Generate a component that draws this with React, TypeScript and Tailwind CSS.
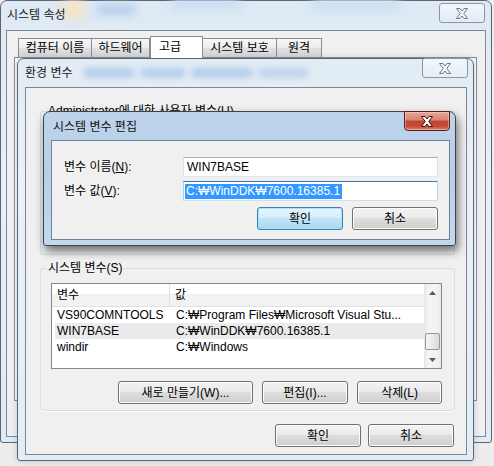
import React from 'react';

const FONT = "font-['Liberation_Sans','Noto_Sans_CJK_KR',sans-serif]";

function CloseX({ fill, stroke }: { fill: string; stroke: string }) {
  return (
    <svg width="14" height="11" viewBox="0 0 14 11">
      <path
        d="M1.5 0.5H5L7 3L9 0.5H12.5L8.8 5.5L12.5 10.5H9L7 8L5 10.5H1.5L5.2 5.5Z"
        fill={fill}
        stroke={stroke}
        strokeWidth="1"
        strokeLinejoin="round"
      />
    </svg>
  );
}

function InactiveClose({ className = '' }: { className?: string }) {
  return (
    <div
      className={`flex h-[20px] w-[46px] shrink-0 items-center justify-center rounded-[3px] border border-[#8b96a2] bg-[linear-gradient(180deg,rgba(255,255,255,0.6),rgba(232,240,247,0.4))] ${className}`}
    >
      <CloseX fill="#f4f7fa" stroke="#6e7a86" />
    </div>
  );
}

function ActiveClose({ className = '' }: { className?: string }) {
  return (
    <div
      className={`flex h-[20px] w-[46px] shrink-0 items-center justify-center rounded-b-[4px] rounded-t-[1px] border border-[#5a2018] bg-[linear-gradient(180deg,#e7a797_0%,#d9826f_45%,#c4432f_50%,#c64c38_80%,#dc8468_100%)] shadow-[inset_0_0_0_1px_rgba(255,220,210,0.45)] ${className}`}
    >
      <CloseX fill="#ffffff" stroke="#3b1510" />
    </div>
  );
}

function Button({ children, className = '', primary = false }: { children: React.ReactNode; className?: string; primary?: boolean }) {
  return (
    <div
      className={`flex h-[23px] shrink-0 items-center justify-center rounded-[3px] border ${
        primary
          ? 'border-[#3c7fb1] bg-[linear-gradient(180deg,#e5f4fc_0%,#d6eefb_45%,#bfe4f8_50%,#a9d9f3_100%)] shadow-[inset_0_0_0_1px_#aee0fa]'
          : 'border-[#707070] bg-[linear-gradient(180deg,#f2f2f2_0%,#ebebeb_45%,#dddddd_50%,#cfcfcf_100%)] shadow-[inset_0_0_0_1px_#fcfcfc]'
      } ${className}`}
    >
      {children}
    </div>
  );
}

function Tab({ children, className = '' }: { children: React.ReactNode; className?: string }) {
  return (
    <div
      className={`flex h-[19px] items-center justify-center border border-b-0 border-[#898c95] bg-[linear-gradient(180deg,#f7f7f7,#ececec_50%,#e0e0e0_51%,#d6d6d6)] ${className}`}
    >
      {children}
    </div>
  );
}

function Arrow({ up }: { up?: boolean }) {
  return (
    <svg width="7" height="4" viewBox="0 0 7 4">
      <path d={up ? 'M0 4L3.5 0L7 4Z' : 'M0 0L3.5 4L7 0Z'} fill="#5a5a5a" />
    </svg>
  );
}

function SystemProperties() {
  return (
    <div className="absolute left-0 top-0 flex h-[443px] w-[492px] flex-col rounded-t-[7px] rounded-b-[3px] border border-[#5b6570] bg-[linear-gradient(180deg,#dde9f4,#e8f0f8_40%,#e1ebf5)] px-[5px] pb-[5px]">
      <div className="relative flex h-[29px] shrink-0 items-start justify-between">
        {/* blurred desktop behind the glass */}
        <div className="absolute left-[54px] top-[-1px] h-[20px] w-[26px] rounded-full bg-[#f3e4c8] blur-[4px]" />
        <div className="absolute left-[90px] top-[3px] h-[11px] w-[40px] rounded-full bg-[#b4cfec] blur-[4px]" />
        <div className="absolute left-[165px] top-[-2px] h-[10px] w-[70px] rounded-full bg-[#c8dcf0] blur-[4px]" />
        <div className="absolute left-[305px] top-[-2px] h-[12px] w-[90px] rounded-full bg-[#cde0f2] blur-[4px]" />
        <span className="relative ml-px mt-[7px] text-[#1b1b1b]">시스템 속성</span>
        <InactiveClose className="relative mr-px mt-[2px]" />
      </div>
      <div className="flex flex-1 flex-col border border-[#7b8896] bg-[#f0f0f0]">
        <div className="flex h-[26px] items-end pl-[11px]">
          <Tab className="w-[74px]">컴퓨터 이름</Tab>
          <Tab className="w-[58px] border-l-0">하드웨어</Tab>
          <div className="relative z-10 -mb-px flex h-[22px] w-[53px] items-start border border-b-0 border-[#898c95] bg-white pl-[8px] pt-[3px]">
            고급
          </div>
          <Tab className="w-[74px] border-l-0">시스템 보호</Tab>
          <Tab className="w-[45px] border-l-0">원격</Tab>
        </div>
        <div className="ml-[7px] h-[344px] w-[463px] border border-[#898c95] bg-[#fcfcfc]" />
      </div>
    </div>
  );
}

function EnvironmentVariables() {
  return (
    <div className="absolute left-[17px] top-[58px] flex h-[403px] w-[457px] flex-col rounded-t-[7px] rounded-b-[3px] border border-[#5b6570] bg-[linear-gradient(180deg,#e2ecf5,#eaf1f8_30%,#e3edf6)] pb-[5px] pl-[7px] pr-[6px] shadow-[0_0_6px_rgba(90,120,150,0.35)]">
      <div className="relative flex h-[28px] shrink-0 items-start justify-between">
        <div className="absolute left-[58px] top-[9px] h-[10px] w-[52px] rounded-full bg-[#b3cdea] blur-[3px]" />
        <div className="absolute left-[115px] top-[9px] h-[10px] w-[46px] rounded-full bg-[#b6cfeb] blur-[3px]" />
        <div className="absolute left-[166px] top-[9px] h-[10px] w-[62px] rounded-full bg-[#b3cdea] blur-[3px]" />
        <div className="absolute left-[232px] top-[9px] h-[10px] w-[52px] rounded-full bg-[#bfd5ed] blur-[3px]" />
        <span className="relative mt-[7px] text-[#1b1b1b]">환경 변수</span>
        <InactiveClose className="relative -mr-px -mt-px" />
      </div>
      <div className="flex flex-1 flex-col border border-[#7b8896] bg-[#f0f0f0] pl-[14px] pr-[11px]">
        {/* user variables, mostly hidden under the edit dialog */}
        <div className="relative mt-[23px] h-[144px] w-[415px] rounded-[3px] border border-[#d5dfe5]">
          <span className="absolute -top-[8px] left-[6px] bg-[#f0f0f0] px-px">Administrator에 대한 사용자 변수(U)</span>
        </div>

        {/* system variables */}
        <div className="relative mt-[13px] flex h-[143px] w-[415px] flex-col rounded-[3px] border border-[#d5dfe5] shadow-[0_1px_0_#ffffff]">
          <span className="absolute -top-[8px] left-[6px] bg-[#f0f0f0] px-px">시스템 변수(S)</span>
          <div className="ml-[10px] mt-[14px] flex h-[86px] w-[391px] border border-[#828790] bg-white">
            <div className="flex flex-1 flex-col">
              <div className="flex h-[23px] border-b border-[#e2e2e2] bg-[linear-gradient(180deg,#ffffff_0%,#ffffff_45%,#f1f2f3_46%,#f1f2f3_100%)]">
                <div className="flex w-[118px] items-center border-r border-[#e1e1e1] pl-[5px]">변수</div>
                <div className="flex items-center pl-[5px]">값</div>
              </div>
              <div className="flex h-[16px] items-center">
                <div className="w-[118px] pl-[5px]">VS90COMNTOOLS</div>
                <div className="pl-[6px]">C:₩Program Files₩Microsoft Visual Stu...</div>
              </div>
              <div className="ml-[3px] flex h-[16px] items-center bg-[#ebebeb]">
                <div className="w-[115px] pl-[2px]">WIN7BASE</div>
                <div className="pl-[6px]">C:₩WinDDK₩7600.16385.1</div>
              </div>
              <div className="flex h-[16px] items-center">
                <div className="w-[118px] pl-[5px]">windir</div>
                <div className="pl-[6px]">C:₩Windows</div>
              </div>
            </div>
            <div className="flex w-[17px] flex-col bg-[linear-gradient(90deg,#e6e6e6,#f3f3f3_25%,#f3f3f3_75%,#e9e9e9)]">
              <div className="flex h-[17px] items-center justify-center">
                <Arrow up />
              </div>
              <div className="flex-1">
                <div className="ml-[1px] mt-[32px] h-[17px] w-[15px] rounded-[2px] border border-[#979797] bg-[linear-gradient(90deg,#f5f5f5,#e9e9e9_50%,#d9d9d9)]" />
              </div>
              <div className="flex h-[17px] items-center justify-center">
                <Arrow />
              </div>
            </div>
          </div>
          <div className="mt-[12px] flex justify-end gap-[9px] pr-[12px]">
            <Button className="w-[135px]">새로 만들기(W)...</Button>
            <Button className="w-[86px]">편집(I)...</Button>
            <Button className="w-[85px]">삭제(L)</Button>
          </div>
        </div>

        <div className="mt-[13px] flex justify-end gap-[7px] pr-px">
          <Button className="w-[86px]">확인</Button>
          <Button className="w-[86px]">취소</Button>
        </div>
      </div>
    </div>
  );
}

function EditVariable() {
  return (
    <div className="absolute left-[43px] top-[111px] flex h-[135px] w-[413px] flex-col rounded-t-[7px] rounded-b-[3px] border border-[#3b424a] bg-[linear-gradient(180deg,#bdd4eb,#b7cfe9_45%,#c3d8ee)] pb-[5px] pl-[7px] pr-[5px] shadow-[2px_5px_10px_rgba(0,0,0,0.55)]">
      <div className="flex h-[28px] shrink-0 items-start justify-between">
        <span className="ml-[2px] mt-[8px] text-[#111]">시스템 변수 편집</span>
        <ActiveClose className="-mt-px" />
      </div>
      <div className="flex flex-1 flex-col border border-[#6f8196] bg-[#f0f0f0] pr-[11px]">
        <div className="mt-[16px] flex items-center">
          <span className="w-[131px] pl-[12px]">
            변수 이름(<span className="underline">N</span>):
          </span>
          <div className="flex h-[20px] w-[255px] items-center border border-[#abadb3] border-b-[#e3e9ef] border-l-[#e2e3ea] border-r-[#dbdfe6] bg-white pl-[3px]">
            WIN7BASE
          </div>
        </div>
        <div className="mt-[4px] flex items-center">
          <span className="w-[131px] pl-[12px]">
            변수 값(<span className="underline">V</span>):
          </span>
          <div className="flex h-[20px] w-[255px] items-center border border-[#3d7bad] border-b-[#c7e2f1] border-l-[#b5cfe7] border-r-[#b7d9ed] bg-white pl-px">
            <span className="bg-[#3399ff] pl-px pr-[2px] leading-[15px] text-white">C:₩WinDDK₩7600.16385.1</span>
          </div>
        </div>
        <div className="mt-[6px] flex justify-end gap-[9px]">
          <Button primary className="w-[86px]">
            확인
          </Button>
          <Button className="w-[86px]">취소</Button>
        </div>
      </div>
    </div>
  );
}

export default function App() {
  return (
    <div className={`relative h-[466px] w-[494px] overflow-hidden bg-[#ededed] text-[12px] leading-[14px] text-black ${FONT}`}>
      <SystemProperties />
      <EnvironmentVariables />
      <EditVariable />
    </div>
  );
}
